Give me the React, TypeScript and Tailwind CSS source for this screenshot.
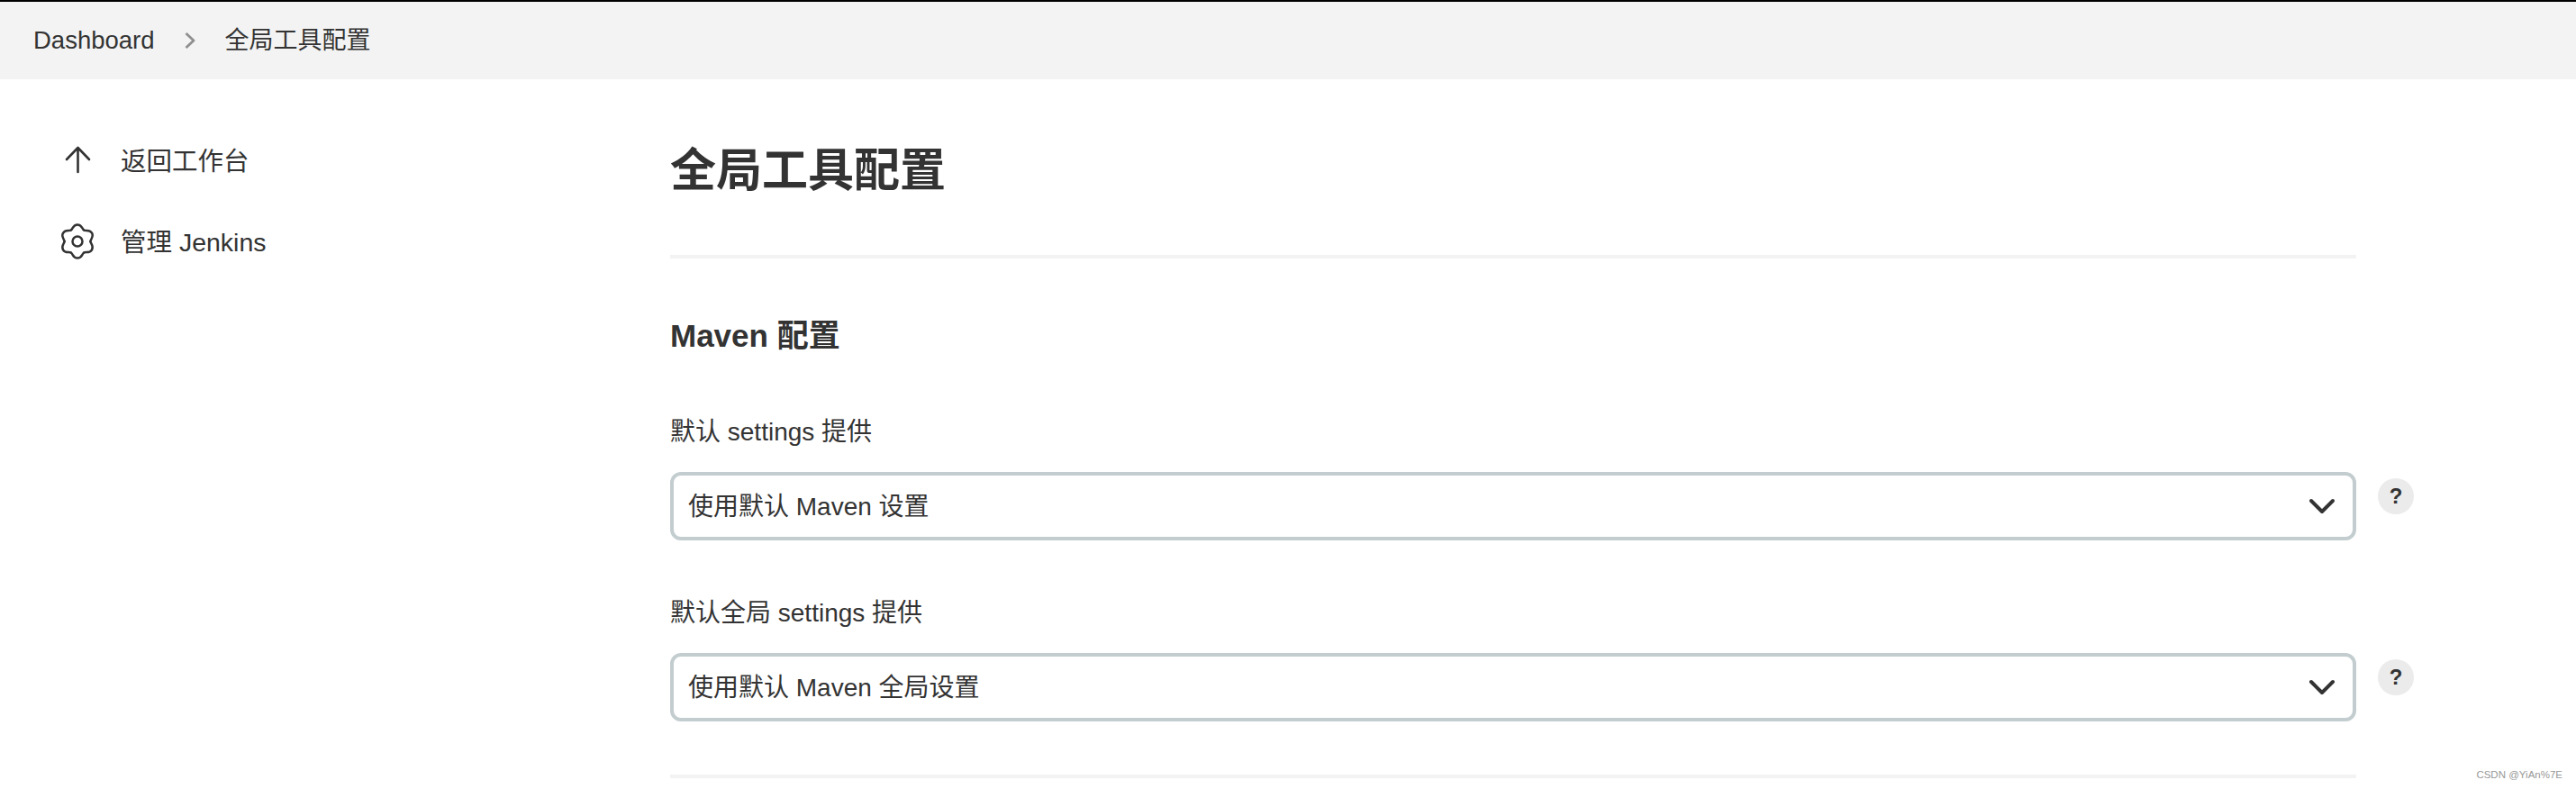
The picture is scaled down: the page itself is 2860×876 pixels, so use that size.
import { ChevronDown } from 'lucide-react'

const cjk = "font-['Liberation_Sans','Noto_Sans_CJK_SC',sans-serif]"

const ArrowIcon = () => (
  <svg viewBox="0 0 40 40" className="size-10 shrink-0" fill="none" stroke="#333" strokeWidth="2.6" strokeLinecap="round" strokeLinejoin="round">
    <path d="M20.500 6v27M8 19L20.500 6L33 19" />
  </svg>
)

// six lobes, one segment rotated round the centre
const GearIcon = () => (
  <svg viewBox="0 0 40 40" className="size-10 shrink-0" fill="none" stroke="#333" strokeWidth="2.5" strokeLinecap="round">
    {[0, 60, 120, 180, 240, 300].map((deg) => (
      <path key={deg} d="M12.800 7.500C15 6.200 15 1.500 20 1.500C25 1.500 25 6.200 27.200 7.500" transform={`rotate(${deg} 20 20)`} />
    ))}
    <circle cx="20" cy="20" r="5.500" />
  </svg>
)

const Chevron = () => (
  <svg viewBox="0 0 12 18" className="mx-[33px] h-[18px] w-[12px] shrink-0" fill="none" stroke="#8f8f8f" strokeWidth="2.800" strokeLinejoin="round">
    <path d="M1.500 1L10 9L1.500 17" />
  </svg>
)

const SelectField = ({ label, value }: { label: string; value: string }) => (
  <div>
    <div className="mb-[24px] text-[28px] leading-[40px] text-[#333]">{label}</div>
    <div className="flex items-start">
      <div className="flex h-[76px] w-[1872px] items-center justify-between rounded-[12px] border-4 border-[#c3cdcf] pl-[16px] pr-[10px] text-[28px] text-[#333]">
        <span className="pt-[2px]">{value}</span>
        <ChevronDown className="size-[48px]" strokeWidth={2} />
      </div>
      <div className="ml-[24px] mt-[7px] flex size-[40px] items-center justify-center rounded-full bg-[#ebebeb] text-[24px] font-bold text-[#333]">?</div>
    </div>
  </div>
)

export default function App() {
  return (
    <div className={`relative h-[876px] overflow-hidden bg-white ${cjk}`}>
      <div className="flex h-[88px] items-center border-t-2 border-black bg-[#f3f3f3] pl-[37px] text-[27px] text-[#333]">
        <span className="text-[27.500px]">Dashboard</span>
        <Chevron />
        <span>全局工具配置</span>
      </div>
      <div className="flex">
        <div className="w-[744px] shrink-0 pl-[66px] pt-[45px] text-[28.500px] text-[#333]">
          <div className="flex h-[90px] items-center gap-[28px]">
            <ArrowIcon />
            <span className="pt-[2px]">返回工作台</span>
          </div>
          <div className="flex h-[90px] items-center gap-[28px]">
            <GearIcon />
            <span className="pt-[2px]">管理 Jenkins</span>
          </div>
        </div>
        <div className="min-w-0 flex-1">
          <h1 className="mt-[66px] text-[51px] font-bold leading-[72px] text-[#333]">全局工具配置</h1>
          <div className="mt-[57px] h-[4px] w-[1872px] bg-[#f3f3f3]" />
          <h2 className="mb-[62px] mt-[61px] text-[35px] font-bold leading-[50px] text-[#333]">Maven 配置</h2>
          <div className="flex flex-col gap-[61px]">
            <SelectField label="默认 settings 提供" value="使用默认 Maven 设置" />
            <SelectField label="默认全局 settings 提供" value="使用默认 Maven 全局设置" />
          </div>
          <div className="mt-[59px] h-[4px] w-[1872px] bg-[#f3f3f3]" />
        </div>
      </div>
      <div className="absolute bottom-[8px] right-[15px] text-[11.500px] leading-[16px] text-[#999]">CSDN @YiAn%7E</div>
    </div>
  )
}
